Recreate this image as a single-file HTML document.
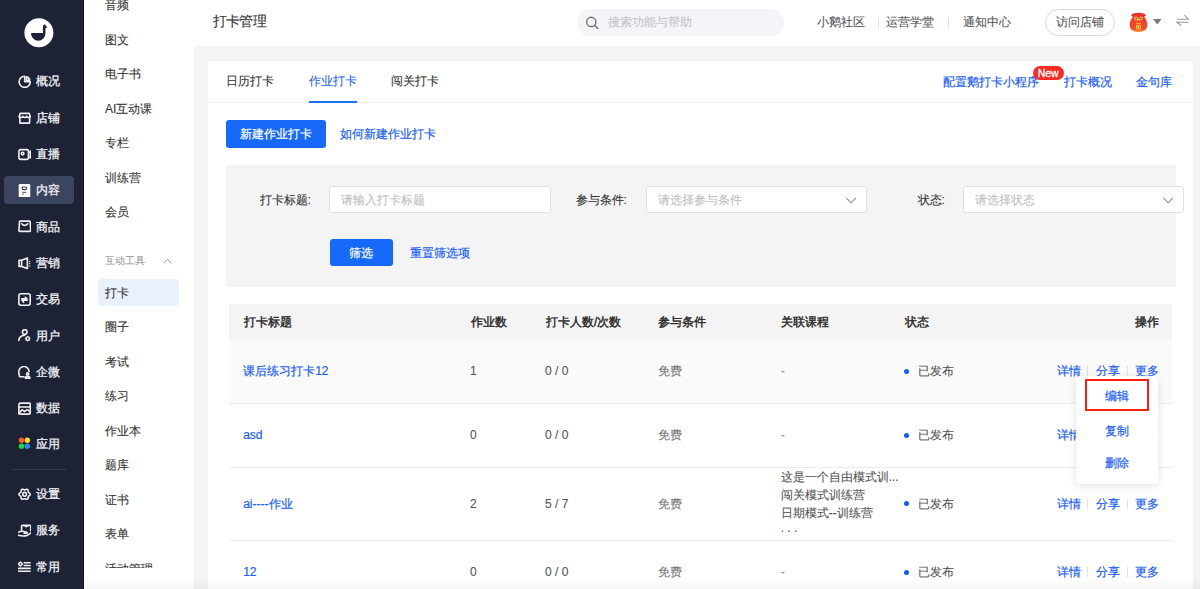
<!DOCTYPE html>
<html><head><meta charset="utf-8">
<style>
*{margin:0;padding:0;box-sizing:border-box}
html,body{width:1200px;height:589px;overflow:hidden;background:#f4f4f4;font-family:"Liberation Sans",sans-serif;font-size:12px;color:#333}
.a{position:absolute}
.t{position:absolute;line-height:20px;height:20px;white-space:nowrap;-webkit-text-stroke-width:0.1px}
.b{color:#1a5ef5;-webkit-text-stroke-width:0.2px}
#side{position:absolute;left:0;top:0;width:84px;height:589px;background:#1d2234}
#side .t{color:#f0f1f4;-webkit-text-stroke-width:0.3px}
#sub{position:absolute;left:84px;top:0;width:110px;height:589px;background:#fff;overflow:hidden}
#sub .t{color:#333}
#hdr{position:absolute;left:0;top:0;width:1200px;height:46px}
.inp{position:absolute;background:#fff;border:1px solid #e0e0e0;border-radius:3px}
.ph{color:#c0c0c0}
.th{font-weight:normal;color:#262626;-webkit-text-stroke-width:0.4px}
.cell{color:#555}
.sep{position:absolute;width:1px;height:10px;background:#e2e2e2}
.line{position:absolute;left:229px;width:943px;height:1px;background:#ececec}
</style></head><body>
<div class="a" style="left:194px;top:0;width:1006px;height:46px;background:#fff"></div>
<div class="a" style="left:208px;top:60.5px;width:985px;height:529px;background:#fff"></div>
<div id="side">
<svg class="a" style="left:24px;top:18px" width="30" height="30" viewBox="0 0 30 30"><circle cx="14.9" cy="14.8" r="14.5" fill="#fff"/><path d="M7 15.1 L18.9 15.1 L18.9 9.2 Q18.9 6.7 20.4 6.6 Q21.6 6.6 21.9 7.8 L23.5 9.7 L21.5 9.7 L21.5 15.1 A7.25 7.6 0 0 1 7 15.1 Z" fill="#1d2336"/></svg>
<div class="a" style="left:4px;top:176px;width:70px;height:28px;border-radius:4px;background:#3c455e"></div>
<div class="a" style="left:11px;top:468.5px;width:55px;height:1px;background:#343a4d"></div>
<svg class="a" style="left:18px;top:74.5px" width="13" height="13" viewBox="0 0 13 13"><path d="M6.7 1.2 V6.8 H12.3 A5.6 5.6 0 1 1 6.7 1.2 Z" stroke="#f0f1f4" stroke-width="1.6" fill="none" stroke-linecap="round" stroke-linejoin="round"/><path d="M8.4 1.9 Q11.2 2.4 11.7 5.2 H8.4 Z" stroke="#f0f1f4" stroke-width="1.6" fill="none" stroke-linecap="round" stroke-linejoin="round" stroke-width="1.2"/></svg>
<div class="t" style="left:36px;top:71px;">概况</div>
<svg class="a" style="left:18px;top:111.5px" width="13" height="13" viewBox="0 0 13 13"><path d="M1.9 11.1 V5.4 L1.2 4.6 L2.3 1.35 H11.2 L12.3 4.6 L11.6 5.4 V11.1 Z" stroke="#f0f1f4" stroke-width="1.6" fill="none" stroke-linecap="round" stroke-linejoin="round"/><path d="M1.2 4.6 Q3 6.6 4.8 4.4 Q6.7 6.6 8.7 4.4 Q10.5 6.6 12.3 4.6" stroke="#f0f1f4" stroke-width="1.6" fill="none" stroke-linecap="round" stroke-linejoin="round" stroke-width="1.4"/></svg>
<div class="t" style="left:36px;top:108px;">店铺</div>
<svg class="a" style="left:18px;top:147.5px" width="13" height="13" viewBox="0 0 13 13"><rect x="0.9" y="1.6" width="9.6" height="9.8" rx="1.8" stroke="#f0f1f4" stroke-width="1.6" fill="none" stroke-linecap="round" stroke-linejoin="round"/><circle cx="4.6" cy="5.6" r="1.3" stroke="#f0f1f4" stroke-width="1.6" fill="none" stroke-linecap="round" stroke-linejoin="round" stroke-width="1.2"/><path d="M10.5 5 L12.5 3.2 V9.9 L10.5 8" stroke="#f0f1f4" stroke-width="1.6" fill="none" stroke-linecap="round" stroke-linejoin="round" stroke-width="1.3"/></svg>
<div class="t" style="left:36px;top:144px;">直播</div>
<svg class="a" style="left:18px;top:183.5px" width="13" height="13" viewBox="0 0 13 13"><rect x="0.7" y="0" width="11.6" height="13.5" rx="1.3" fill="#fff"/><rect x="4.3" y="3" width="4.2" height="2.6" rx="0.8" stroke="#3c455e" stroke-width="1.2" fill="none"/><path d="M4.3 8.4 H8.3 M4.3 10.1 H5.8" stroke="#6a7184" stroke-width="1.1" fill="none"/></svg>
<div class="t" style="left:36px;top:180px;">内容</div>
<svg class="a" style="left:18px;top:220.0px" width="13" height="13" viewBox="0 0 13 13"><path d="M2.3 1.1 H11.3 Q12 1.1 12.1 1.8 L12.7 10.4 Q12.7 11.4 11.8 11.4 H1.8 Q0.9 11.4 0.9 10.4 L1.5 1.8 Q1.6 1.1 2.3 1.1 Z" stroke="#f0f1f4" stroke-width="1.6" fill="none" stroke-linecap="round" stroke-linejoin="round"/><path d="M3.7 3.8 Q6.7 7 9.7 3.8" stroke="#f0f1f4" stroke-width="1.6" fill="none" stroke-linecap="round" stroke-linejoin="round"/></svg>
<div class="t" style="left:36px;top:216.5px;">商品</div>
<svg class="a" style="left:18px;top:256.5px" width="13" height="13" viewBox="0 0 13 13"><path d="M1 3.2 H3.6 L9.4 1 V11.5 L3.6 9.4 H1 Z" stroke="#f0f1f4" stroke-width="1.6" fill="none" stroke-linecap="round" stroke-linejoin="round"/><path d="M3.6 3.4 V9.2" stroke="#f0f1f4" stroke-width="1.6" fill="none" stroke-linecap="round" stroke-linejoin="round" stroke-width="1.2"/><circle cx="11.7" cy="4.4" r="0.65" fill="#e8e9ec"/><circle cx="11.7" cy="6.5" r="0.65" fill="#e8e9ec"/><circle cx="11.7" cy="9" r="0.65" fill="#e8e9ec"/></svg>
<div class="t" style="left:36px;top:253px;">营销</div>
<svg class="a" style="left:18px;top:292.5px" width="13" height="13" viewBox="0 0 13 13"><rect x="0.9" y="0.8" width="11.3" height="11.4" rx="1.9" stroke="#f0f1f4" stroke-width="1.6" fill="none" stroke-linecap="round" stroke-linejoin="round"/><path d="M3.8 5.9 H9 L7.3 4.2 M9.2 7.3 H4 L5.7 9.2" stroke="#f0f1f4" stroke-width="1.6" fill="none" stroke-linecap="round" stroke-linejoin="round" stroke-width="1.3"/></svg>
<div class="t" style="left:36px;top:289px;">交易</div>
<svg class="a" style="left:18px;top:329.0px" width="13" height="13" viewBox="0 0 13 13"><circle cx="6.7" cy="2.9" r="2.3" stroke="#f0f1f4" stroke-width="1.6" fill="none" stroke-linecap="round" stroke-linejoin="round"/><path d="M0.8 11.4 Q1.2 6.8 6.5 6.2" stroke="#f0f1f4" stroke-width="1.6" fill="none" stroke-linecap="round" stroke-linejoin="round"/><path d="M12.70 9.70 L12.58 9.95 L12.29 10.16 L11.95 10.30 L11.70 10.43 L11.63 10.60 L11.71 10.86 L11.85 11.21 L11.92 11.56 L11.82 11.82 L11.56 11.92 L11.21 11.85 L10.86 11.71 L10.60 11.63 L10.43 11.70 L10.30 11.95 L10.16 12.29 L9.95 12.58 L9.70 12.70 L9.45 12.58 L9.24 12.29 L9.10 11.95 L8.97 11.70 L8.80 11.63 L8.54 11.71 L8.19 11.85 L7.84 11.92 L7.58 11.82 L7.48 11.56 L7.55 11.21 L7.69 10.86 L7.77 10.60 L7.70 10.43 L7.45 10.30 L7.11 10.16 L6.82 9.95 L6.70 9.70 L6.82 9.45 L7.11 9.24 L7.45 9.10 L7.70 8.97 L7.77 8.80 L7.69 8.54 L7.55 8.19 L7.48 7.84 L7.58 7.58 L7.84 7.48 L8.19 7.55 L8.54 7.69 L8.80 7.77 L8.97 7.70 L9.10 7.45 L9.24 7.11 L9.45 6.82 L9.70 6.70 L9.95 6.82 L10.16 7.11 L10.30 7.45 L10.43 7.70 L10.60 7.77 L10.86 7.69 L11.21 7.55 L11.56 7.48 L11.82 7.58 L11.92 7.84 L11.85 8.19 L11.71 8.54 L11.63 8.80 L11.70 8.97 L11.95 9.10 L12.29 9.24 L12.58 9.45 L12.70 9.70Z" fill="#e8e9ec"/><circle cx="9.7" cy="9.7" r="0.85" fill="#1d2336"/></svg>
<div class="t" style="left:36px;top:325.5px;">用户</div>
<svg class="a" style="left:18px;top:365.5px" width="13" height="13" viewBox="0 0 13 13"><path d="M6 10.7 H2.3 Q1.2 10.7 1.4 9.6 Q0.8 8.2 0.8 5.9 A5.1 5.1 0 0 1 11 5.4" stroke="#f0f1f4" stroke-width="1.6" fill="none" stroke-linecap="round" stroke-linejoin="round"/><circle cx="9.6" cy="7.9" r="1.15" stroke="#f0f1f4" stroke-width="1.6" fill="none" stroke-linecap="round" stroke-linejoin="round" stroke-width="1.2"/><path d="M7.2 12.1 Q7.4 10.3 9.6 10.3 Q11.8 10.3 12 12.1 Z" stroke="#f0f1f4" stroke-width="1.6" fill="none" stroke-linecap="round" stroke-linejoin="round" stroke-width="1.2"/></svg>
<div class="t" style="left:36px;top:362px;">企微</div>
<svg class="a" style="left:18px;top:401.5px" width="13" height="13" viewBox="0 0 13 13"><rect x="0.9" y="1.1" width="11.4" height="11" rx="1.5" stroke="#f0f1f4" stroke-width="1.6" fill="none" stroke-linecap="round" stroke-linejoin="round"/><path d="M0.9 5 H12.3" stroke="#f0f1f4" stroke-width="1.6" fill="none" stroke-linecap="round" stroke-linejoin="round" stroke-width="1.3"/><path d="M0.6 11.6 L4.1 7.9 L6.8 9.5 L9.2 7.5 L12.2 9.9" stroke="#f0f1f4" stroke-width="1.6" fill="none" stroke-linecap="round" stroke-linejoin="round" stroke-width="1.3"/></svg>
<div class="t" style="left:36px;top:398px;">数据</div>
<svg class="a" style="left:18px;top:437.0px" width="13" height="13" viewBox="0 0 13 13"><circle cx="3.5" cy="3.3" r="2.7" fill="#fc5a2c"/><circle cx="9.3" cy="3.3" r="2.7" fill="#fde21a"/><circle cx="3.5" cy="9.3" r="2.7" fill="#1ad93a"/><circle cx="9.3" cy="9.3" r="2.7" fill="#2489fb"/></svg>
<div class="t" style="left:36px;top:433.5px;">应用</div>
<svg class="a" style="left:18px;top:487.5px" width="13" height="13" viewBox="0 0 13 13"><path d="M12.20 6.30 L12.10 6.78 L11.82 7.22 L11.43 7.59 L11.02 7.91 L10.66 8.19 L10.41 8.50 L10.27 8.87 L10.20 9.32 L10.14 9.84 L10.01 10.36 L9.77 10.82 L9.40 11.15 L8.93 11.30 L8.41 11.28 L7.89 11.13 L7.42 10.93 L6.99 10.76 L6.60 10.70 L6.21 10.76 L5.78 10.93 L5.31 11.13 L4.79 11.28 L4.27 11.30 L3.80 11.15 L3.43 10.82 L3.19 10.36 L3.06 9.84 L3.00 9.32 L2.93 8.87 L2.79 8.50 L2.54 8.19 L2.18 7.91 L1.77 7.59 L1.38 7.22 L1.10 6.78 L1.00 6.30 L1.10 5.82 L1.38 5.38 L1.77 5.01 L2.18 4.69 L2.54 4.41 L2.79 4.10 L2.93 3.73 L3.00 3.28 L3.06 2.76 L3.19 2.24 L3.43 1.78 L3.80 1.45 L4.27 1.30 L4.79 1.32 L5.31 1.47 L5.78 1.67 L6.21 1.84 L6.60 1.90 L6.99 1.84 L7.42 1.67 L7.89 1.47 L8.41 1.32 L8.93 1.30 L9.40 1.45 L9.77 1.78 L10.01 2.24 L10.14 2.76 L10.20 3.28 L10.27 3.73 L10.41 4.10 L10.66 4.41 L11.02 4.69 L11.43 5.01 L11.82 5.38 L12.10 5.82 L12.20 6.30Z" stroke="#f0f1f4" stroke-width="1.6" fill="none" stroke-linecap="round" stroke-linejoin="round"/><circle cx="6.6" cy="6.3" r="1.9" stroke="#f0f1f4" stroke-width="1.6" fill="none" stroke-linecap="round" stroke-linejoin="round" stroke-width="1.3"/></svg>
<div class="t" style="left:36px;top:484px;">设置</div>
<svg class="a" style="left:18px;top:523.5px" width="13" height="13" viewBox="0 0 13 13"><path d="M3.6 6.3 V2.2 Q3.6 1.4 4.4 1.4 H11.9 Q12.7 1.4 12.7 2.2 V6.8" stroke="#f0f1f4" stroke-width="1.6" fill="none" stroke-linecap="round" stroke-linejoin="round"/><path d="M6.6 1.6 Q8.2 3.6 9.9 1.6" stroke="#f0f1f4" stroke-width="1.6" fill="none" stroke-linecap="round" stroke-linejoin="round" stroke-width="1.2"/><path d="M0.5 8.2 Q3 6.6 6 7.6 L8.6 8.3 Q9.6 8.9 8.7 9.5 L6 9.3" stroke="#f0f1f4" stroke-width="1.6" fill="none" stroke-linecap="round" stroke-linejoin="round"/><path d="M0.5 11.3 Q5 12.6 9.2 11.5 L12.6 9.1" stroke="#f0f1f4" stroke-width="1.6" fill="none" stroke-linecap="round" stroke-linejoin="round"/></svg>
<div class="t" style="left:36px;top:520px;">服务</div>
<svg class="a" style="left:18px;top:560.5px" width="13" height="13" viewBox="0 0 13 13"><path d="M2.4 1 L4.4 3 L2.4 5 L0.4 3 Z" stroke="#f0f1f4" stroke-width="1.6" fill="none" stroke-linecap="round" stroke-linejoin="round" stroke-width="1.3"/><path d="M6.2 1.8 H12.1 M6.2 4.5 H12.1 M0.3 7.4 H12.1 M0.3 10.3 H12.1" stroke="#f0f1f4" stroke-width="1.6" fill="none" stroke-linecap="round" stroke-linejoin="round" stroke-width="1.4" stroke-linecap="butt"/></svg>
<div class="t" style="left:36px;top:557px;">常用</div>
<div class="a" style="left:83px;top:0;width:1px;height:589px;background:#121623"></div>
</div>
<div id="sub">
<div class="a" style="left:14px;top:278.7px;width:80.6px;height:27px;border-radius:4px;background:#e9f1fe"></div>
<div class="t" style="left:21px;top:-5px;">音频</div>
<div class="t" style="left:21px;top:29.5px;">图文</div>
<div class="t" style="left:21px;top:64px;">电子书</div>
<div class="t" style="left:21px;top:98.5px;">AI互动课</div>
<div class="t" style="left:21px;top:133px;">专栏</div>
<div class="t" style="left:21px;top:167.5px;">训练营</div>
<div class="t" style="left:21px;top:202px;">会员</div>
<div class="t" style="left:21px;top:282.6px;">打卡</div>
<div class="t" style="left:21px;top:317px;">圈子</div>
<div class="t" style="left:21px;top:351.5px;">考试</div>
<div class="t" style="left:21px;top:386px;">练习</div>
<div class="t" style="left:21px;top:420.5px;">作业本</div>
<div class="t" style="left:21px;top:455px;">题库</div>
<div class="t" style="left:21px;top:489.5px;">证书</div>
<div class="t" style="left:21px;top:524px;">表单</div>
<div class="t" style="left:21px;top:558.5px;">活动管理</div>
<div class="t" style="left:21px;top:250.7px;font-size:10px;color:#999">互动工具</div>
<svg class="a" style="left:79px;top:258px" width="9" height="6" viewBox="0 0 9 6"><path d="M0.8 5.2 L4.5 1.2 L8.2 5.2" stroke="#999" stroke-width="1" fill="none"/></svg>
<div class="a" style="left:0;top:567.5px;width:110px;height:22px;background:#fff"></div>
</div>
<div class="t" style="left:212.6px;top:12px;font-size:13.6px;letter-spacing:-0.6px;color:#333">打卡管理</div>
<div class="a" style="left:577px;top:9px;width:207px;height:27px;border-radius:14px;background:#f4f5f8"></div>
<svg class="a" style="left:586px;top:15.5px" width="14" height="14" viewBox="0 0 14 14"><circle cx="5.3" cy="5.9" r="4.6" stroke="#707070" stroke-width="1.4" fill="none"/><path d="M8.7 9.3 L11.9 12.4" stroke="#707070" stroke-width="1.4" stroke-linecap="round"/></svg>
<div class="t" style="left:608px;top:12px;color:#c4c5c8">搜索功能与帮助</div>
<div class="t" style="left:817px;top:12px;color:#555">小鹅社区</div>
<div class="sep" style="left:878px;top:18px"></div>
<div class="t" style="left:886px;top:12px;color:#555">运营学堂</div>
<div class="sep" style="left:948px;top:18px"></div>
<div class="t" style="left:962.5px;top:12px;color:#555">通知中心</div>
<div class="a" style="left:1045px;top:8.5px;width:70px;height:27.5px;border:1px solid #d9d9d9;border-radius:14px"></div>
<div class="t" style="left:1056px;top:12px;color:#555">访问店铺</div>
<svg class="a" style="left:1129px;top:12px" width="20" height="21" viewBox="0 0 20 21"><defs><linearGradient id="bg1" x1="0" y1="0" x2="0" y2="1"><stop offset="0" stop-color="#f2362b"/><stop offset="0.75" stop-color="#f04a2a"/><stop offset="1" stop-color="#f7892e"/></linearGradient></defs><path d="M4.2 4.5 Q0.6 8.5 0.7 13.5 Q0.9 20 9.5 20 Q18.1 20 18.3 13.5 Q18.4 8.5 14.8 4.5 Z" fill="url(#bg1)"/><ellipse cx="9.5" cy="3.2" rx="7.3" ry="2.5" fill="#e8322a"/><path d="M5.5 5.5 Q7 3.8 9.3 6.3 Q8 8.8 6 7.6 Z M13.5 5.5 Q12 3.8 9.7 6.3 Q11 8.8 13 7.6 Z M9.5 6.3 L8.2 9.3 M9.5 6.3 L10.8 9.3" stroke="#f8d24a" stroke-width="1" fill="none"/><path d="M7.3 11.5 H11.7 M7.5 13.2 H11.5 V16.8 H7.5 Z M9.5 13.2 V16.8 M7.5 15 H11.5" stroke="#f8c840" stroke-width="0.9" fill="none"/></svg>
<svg class="a" style="left:1152.5px;top:19.3px" width="8.5" height="5.5" viewBox="0 0 8.5 5.5"><path d="M0 0 H8.5 L4.25 5.5Z" fill="#7a7a7a"/></svg>
<svg class="a" style="left:1176px;top:14px" width="13" height="13" viewBox="0 0 13 13"><path d="M1 5.3 H12.3 L8.3 1 M12.3 8.3 H1 L5.3 11.7" stroke="#9a9a9a" stroke-width="1.1" fill="none"/></svg>
<div class="t" style="left:225.6px;top:71px;color:#333">日历打卡</div>
<div class="t" style="left:308.8px;top:71px;color:#1f65f2">作业打卡</div>
<div class="t" style="left:391px;top:71px;color:#333">闯关打卡</div>
<div class="a" style="left:208px;top:102px;width:985px;height:1px;background:#ececec"></div>
<div class="a" style="left:309px;top:101px;width:48px;height:2px;background:#1f6ff5"></div>
<div class="t b" style="left:943px;top:72px;">配置鹅打卡小程序</div>
<div class="a" style="left:1032.5px;top:65.5px;width:31.3px;height:14.2px;border-radius:7.1px;background:#fa2a24;color:#fff;font-size:10.5px;line-height:14.2px;text-align:center;-webkit-text-stroke:0.3px #fff">New</div>
<div class="t b" style="left:1064.3px;top:72px;">打卡概况</div>
<div class="t b" style="left:1135.6px;top:72px;">金句库</div>
<div class="a" style="left:225.6px;top:120.2px;width:100px;height:27.5px;border-radius:3px;background:#176af9;color:#fff;line-height:28.5px;text-align:center;-webkit-text-stroke:0.2px #fff">新建作业打卡</div>
<div class="t b" style="left:340.2px;top:124px;">如何新建作业打卡</div>
<div class="a" style="left:225.7px;top:165px;width:950px;height:121.5px;background:#f4f4f4"></div>
<div class="t" style="left:259.5px;top:190px;color:#333">打卡标题:</div>
<div class="inp" style="left:329px;top:186px;width:222px;height:27.3px"></div>
<div class="t ph" style="left:341.3px;top:190px;">请输入打卡标题</div>
<div class="t" style="left:575.6px;top:190px;color:#333">参与条件:</div>
<div class="inp" style="left:645.8px;top:186.3px;width:221px;height:27px"></div>
<div class="t ph" style="left:657.7px;top:190px;">请选择参与条件</div>
<svg class="a" style="left:846px;top:196.5px" width="10" height="7" viewBox="0 0 10 7"><path d="M0.3 1 L5.1 6 L9.8 1" stroke="#9c9c9c" stroke-width="1.2" fill="none"/></svg>
<div class="t" style="left:917.5px;top:190px;color:#333">状态:</div>
<div class="inp" style="left:963.3px;top:186.3px;width:221.2px;height:27px"></div>
<div class="t ph" style="left:975px;top:190px;">请选择状态</div>
<svg class="a" style="left:1162.5px;top:196.5px" width="10" height="7" viewBox="0 0 10 7"><path d="M0.3 1 L5.1 6 L9.8 1" stroke="#9c9c9c" stroke-width="1.2" fill="none"/></svg>
<div class="a" style="left:329.7px;top:238.8px;width:63.4px;height:27.5px;border-radius:3px;background:#176af9;color:#fff;line-height:28px;text-align:center;-webkit-text-stroke:0.2px #fff">筛选</div>
<div class="t b" style="left:410.4px;top:242.5px;">重置筛选项</div>
<div class="a" style="left:229px;top:304.3px;width:943px;height:34.7px;background:#f4f4f4"></div>
<div class="a" style="left:229px;top:339px;width:943px;height:64.5px;background:#fafafa"></div>
<div class="t th" style="left:244.2px;top:312px;">打卡标题</div>
<div class="t th" style="left:470.8px;top:312px;">作业数</div>
<div class="t th" style="left:546px;top:312px;">打卡人数/次数</div>
<div class="t th" style="left:658.3px;top:312px;">参与条件</div>
<div class="t th" style="left:780.7px;top:312px;">关联课程</div>
<div class="t th" style="left:904.8px;top:312px;">状态</div>
<div class="t th" style="left:1134.5px;top:312px;">操作</div>
<div class="line" style="top:403.0px"></div>
<div class="line" style="top:466.9px"></div>
<div class="line" style="top:540.1px"></div>
<div class="t b" style="left:243.2px;top:361px;">课后练习打卡12</div>
<div class="t cell" style="left:470px;top:361px;">1</div>
<div class="t cell" style="left:545px;top:361px;">0 / 0</div>
<div class="t" style="left:658.3px;top:361px;color:#777">免费</div>
<div class="t" style="left:780.7px;top:361px;color:#999">-</div>
<div class="a" style="left:903.7px;top:368.8px;width:5px;height:5px;border-radius:50%;background:#105cfb"></div>
<div class="t" style="left:918px;top:361px;color:#555">已发布</div>
<div class="t b" style="left:1057.3px;top:361px;">详情</div>
<div class="sep" style="left:1087px;top:366px"></div>
<div class="t b" style="left:1095.5px;top:361px;">分享</div>
<div class="sep" style="left:1126.5px;top:366px"></div>
<div class="t b" style="left:1134.7px;top:361px;">更多</div>
<div class="t b" style="left:243.2px;top:425.3px;">asd</div>
<div class="t cell" style="left:470px;top:425.3px;">0</div>
<div class="t cell" style="left:545px;top:425.3px;">0 / 0</div>
<div class="t" style="left:658.3px;top:425.3px;color:#777">免费</div>
<div class="t" style="left:780.7px;top:425.3px;color:#999">-</div>
<div class="a" style="left:903.7px;top:433.1px;width:5px;height:5px;border-radius:50%;background:#105cfb"></div>
<div class="t" style="left:918px;top:425.3px;color:#555">已发布</div>
<div class="t b" style="left:1057.3px;top:425.3px;">详情</div>
<div class="sep" style="left:1087px;top:430.3px"></div>
<div class="t b" style="left:1095.5px;top:425.3px;">分享</div>
<div class="sep" style="left:1126.5px;top:430.3px"></div>
<div class="t b" style="left:1134.7px;top:425.3px;">更多</div>
<div class="t b" style="left:243.2px;top:493.5px;">ai----作业</div>
<div class="t cell" style="left:470px;top:493.5px;">2</div>
<div class="t cell" style="left:545px;top:493.5px;">5 / 7</div>
<div class="t" style="left:658.3px;top:493.5px;color:#777">免费</div>
<div class="a" style="left:903.7px;top:501.3px;width:5px;height:5px;border-radius:50%;background:#105cfb"></div>
<div class="t" style="left:918px;top:493.5px;color:#555">已发布</div>
<div class="t b" style="left:1057.3px;top:493.5px;">详情</div>
<div class="sep" style="left:1087px;top:498.5px"></div>
<div class="t b" style="left:1095.5px;top:493.5px;">分享</div>
<div class="sep" style="left:1126.5px;top:498.5px"></div>
<div class="t b" style="left:1134.7px;top:493.5px;">更多</div>
<div class="t b" style="left:243.2px;top:562.3px;">12</div>
<div class="t cell" style="left:470px;top:562.3px;">0</div>
<div class="t cell" style="left:545px;top:562.3px;">0 / 0</div>
<div class="t" style="left:658.3px;top:562.3px;color:#777">免费</div>
<div class="t" style="left:780.7px;top:562.3px;color:#999">-</div>
<div class="a" style="left:903.7px;top:570.0999999999999px;width:5px;height:5px;border-radius:50%;background:#105cfb"></div>
<div class="t" style="left:918px;top:562.3px;color:#555">已发布</div>
<div class="t b" style="left:1057.3px;top:562.3px;">详情</div>
<div class="sep" style="left:1087px;top:567.3px"></div>
<div class="t b" style="left:1095.5px;top:562.3px;">分享</div>
<div class="sep" style="left:1126.5px;top:567.3px"></div>
<div class="t b" style="left:1134.7px;top:562.3px;">更多</div>
<div class="t" style="left:780.7px;top:467px;color:#555;line-height:20px">这是一个自由模式训...</div>
<div class="t" style="left:780.7px;top:485px;color:#555;line-height:20px">闯关模式训练营</div>
<div class="t" style="left:780.7px;top:502.70000000000005px;color:#555;line-height:20px">日期模式--训练营</div>
<div class="t" style="left:780.7px;top:518px;color:#555;line-height:20px">. . .</div>
<div class="a" style="left:1075.7px;top:375.5px;width:82.7px;height:108px;background:#fff;border-radius:4px;box-shadow:0 2px 8px rgba(0,0,0,0.12)"></div>
<div class="a" style="left:1085.2px;top:379px;width:64px;height:31.6px;border:2.2px solid #f61f10"></div>
<div class="t b" style="left:1105.4px;top:386px;">编辑</div>
<div class="t b" style="left:1105.4px;top:420.5px;">复制</div>
<div class="t b" style="left:1105.4px;top:453px;">删除</div>
<div class="a" style="left:84px;top:578px;width:1116px;height:11px;background:linear-gradient(rgba(0,0,0,0),rgba(0,0,0,0.045))"></div>
</body></html>
